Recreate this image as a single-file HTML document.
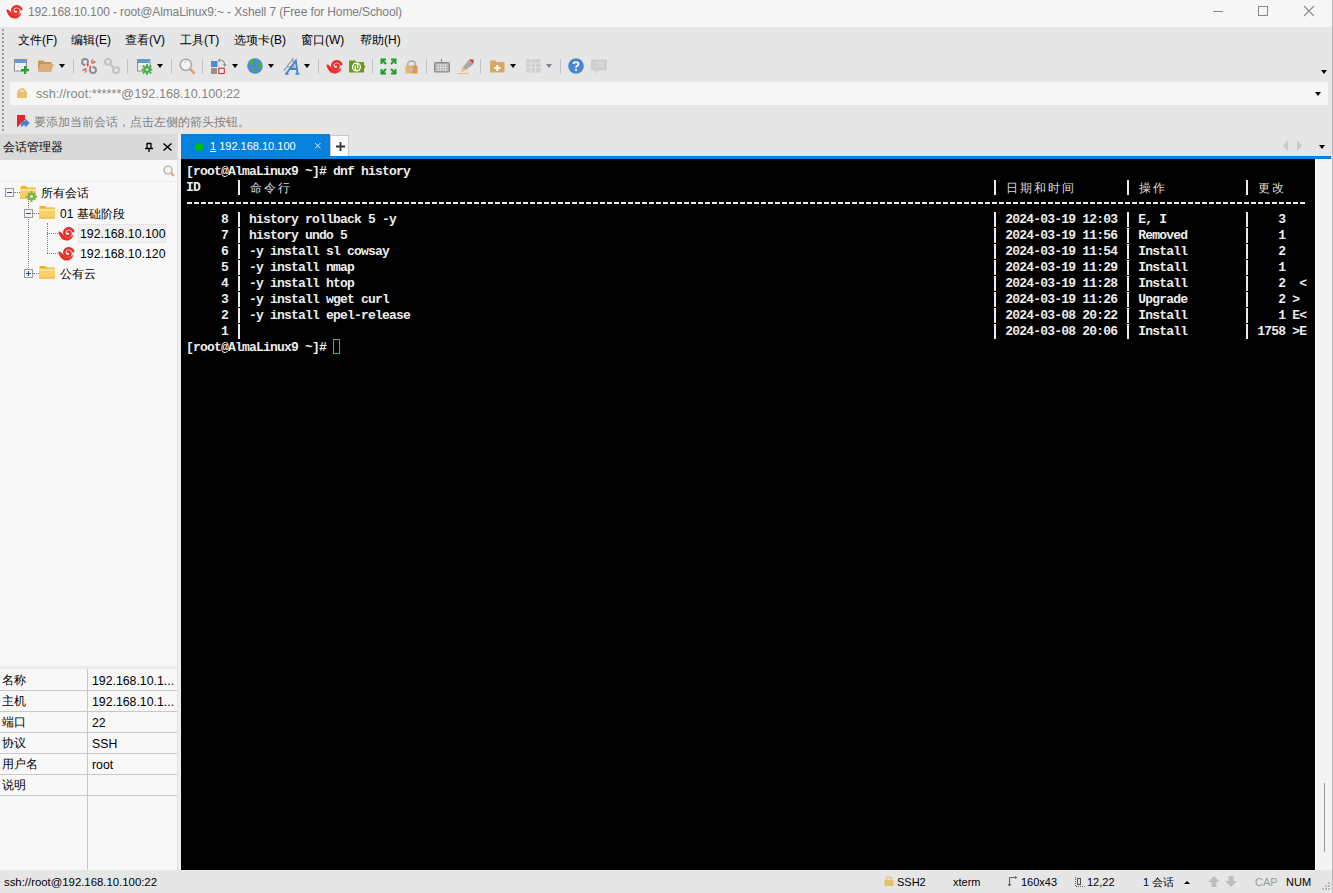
<!DOCTYPE html>
<html><head><meta charset="utf-8">
<style>
*{box-sizing:border-box;margin:0;padding:0}
html,body{width:1333px;height:893px;overflow:hidden;background:#e6e6e6;font-family:"Liberation Sans",sans-serif;font-size:12px;color:#000}
.a{position:absolute}
svg{position:absolute;overflow:visible}
#title{left:0;top:0;width:1333px;height:27px;background:#f6f6f6}
#menu{left:0;top:27px;width:1332px;height:25px;background:#e6e6e6}
#tool{left:0;top:52px;width:1332px;height:30px;background:#e6e6e6}
#addr{left:10px;top:82px;width:1318px;height:23px;background:#f6f6f6}
#hint{left:0;top:105px;width:1332px;height:29px;background:#e6e6e6}
#rborder{left:1332px;top:0;width:1px;height:893px;background:#b8b8b8}
#sm{left:0;top:134px;width:177px;height:736px;background:#f8f8f8}
#smh{left:0;top:134px;width:177px;height:26px;background:#d9d9d9}
#term{left:181px;top:159px;width:1134px;height:711px;background:#000}
#sb{left:1315px;top:159px;width:17px;height:711px;background:#f3f3f3;border-left:1px solid #fff}
#split{left:177px;top:134px;width:4px;height:736px;background:#efefef;border-left:1px solid #e2e2e2}
#status{left:0;top:870px;width:1332px;height:23px;background:#e6e6e6}
.t{position:absolute;white-space:nowrap;line-height:16px}
.tl{position:absolute;left:186px;font-family:"Liberation Mono",monospace;font-weight:bold;color:#ededed;font-size:13px;letter-spacing:-0.8px;line-height:16px;white-space:pre}
.bar{position:absolute;width:2.3px;height:15px;background:#ececec}
.dash{position:absolute;left:187px;width:1120px;height:2px;background:repeating-linear-gradient(90deg,#ececec 0 5px,transparent 5px 7px)}
.tc{position:absolute;font-family:"Liberation Sans",sans-serif;color:#dcdcdc;font-size:12px;letter-spacing:2px;line-height:16px;white-space:pre}
.menu{top:32px;font-size:12px}
.tri{position:absolute;width:0;height:0;border-left:3.5px solid transparent;border-right:3.5px solid transparent;border-top:4px solid #000}
.sep{position:absolute;top:59px;width:1px;height:15px;background:#c0c0c8}
.grid{position:absolute;left:0;width:177px;height:1px;background:#c8c8c8}
.gl{position:absolute;left:2px;font-size:12px;margin-top:1px}
.gv{position:absolute;left:92px;font-size:12.3px;margin-top:1.5px}
.st{position:absolute;top:874px;font-size:11px}
</style></head><body>
<div id="title" class="a"></div>
<div id="menu" class="a"></div>
<div id="tool" class="a"></div>
<div id="addr" class="a"></div>
<div id="hint" class="a"></div>
<div id="sm" class="a"></div>
<div id="smh" class="a"></div>
<div id="term" class="a"></div>
<div id="sb" class="a"></div>
<div id="split" class="a"></div>
<div id="status" class="a"></div>
<div id="rborder" class="a"></div>
<!-- title bar -->
<svg style="left:6px;top:3.5px" width="17" height="15" viewBox="0 0 17 15">
<path d="M9.23,7.03 L9.11,6.96 L8.99,6.86 L8.89,6.74 L8.79,6.61 L8.71,6.47 L8.65,6.30 L8.60,6.13 L8.56,5.95 L8.55,5.75 L8.56,5.55 L8.63,5.38 L8.73,5.24 L8.85,5.10 L8.97,4.97 L9.11,4.85 L9.27,4.73 L9.43,4.63 L9.60,4.54 L9.78,4.46 L9.97,4.40 L10.17,4.35 L10.37,4.31 L10.58,4.29 L10.80,4.29 L11.01,4.31 L11.23,4.34 L11.44,4.39 L11.66,4.46 L11.87,4.54 L12.07,4.64 L12.28,4.76 L12.47,4.90 L12.65,5.05 L12.83,5.22 L12.99,5.41 L13.14,5.61 L13.27,5.82 L13.39,6.04 L13.49,6.28 L13.58,6.53 L13.64,6.78 L13.69,7.04 L13.72,7.31 L13.72,7.58 L13.71,7.86 L13.67,8.13 L13.61,8.41 L13.53,8.68 L13.43,8.95 L13.30,9.21 L13.15,9.47 L12.99,9.71 L12.80,9.94 L12.59,10.17 L12.37,10.37 L12.13,10.56 L11.87,10.73 L11.59,10.89 L11.30,11.02 L11.00,11.13 L10.69,11.22 L10.37,11.28 L10.05,11.32 L9.71,11.34 L9.38,11.33 L9.04,11.29 L8.71,11.23 L8.37,11.14 L8.05,11.03 L7.73,10.88 L7.41,10.72 L7.11,10.53 L6.83,10.31 L6.55,10.07 L6.30,9.81 L6.06,9.52 L5.85,9.22 L5.66,8.90 L5.49,8.56 L5.34,8.21 L5.23,7.85 L5.14,7.47 L5.08,7.08 L5.04,6.69 L5.04,6.30 L5.07,5.90 L5.13,5.50 L5.22,5.11 L5.34,4.72 L5.50,4.34 L5.68,3.97 L5.89,3.61 L6.13,3.26 L6.40,2.94 L6.69,2.63 L7.01,2.34 L7.35,2.08 L7.72,1.84 L8.10,1.63 L8.50,1.45 L8.92,1.30 L9.35,1.18 L9.79,1.09 L10.24,1.04 L10.70,1.02 L11.16,1.03 L11.61,1.09 L12.07,1.17 L12.52,1.29 L12.97,1.45 L13.40,1.64 L13.82,1.87 L14.22,2.13 L14.61,2.42 L14.98,2.74 L15.32,3.09 L15.63,3.47 L15.92,3.87 L16.18,4.30 L16.40,4.74 L16.40,4.74 L16.48,5.24 L16.36,5.74 L16.06,6.15 L15.62,6.41 L15.12,6.49 L14.63,6.37 L14.22,6.07 L13.96,5.63 L13.96,5.63 L13.81,5.37 L13.64,5.12 L13.45,4.88 L13.25,4.67 L13.04,4.47 L12.81,4.29 L12.57,4.13 L12.32,3.99 L12.07,3.87 L11.81,3.78 L11.54,3.70 L11.28,3.65 L11.01,3.61 L10.74,3.60 L10.48,3.61 L10.22,3.64 L9.97,3.69 L9.73,3.75 L9.49,3.84 L9.26,3.94 L9.05,4.05 L8.85,4.19 L8.66,4.33 L8.48,4.49 L8.32,4.66 L8.18,4.84 L8.05,5.02 L7.93,5.22 L7.84,5.42 L7.76,5.62 L7.70,5.83 L7.65,6.03 L7.63,6.24 L7.61,6.45 L7.62,6.65 L7.64,6.85 L7.68,7.04 L7.73,7.23 L7.79,7.41 L7.87,7.58 L7.96,7.74 L8.05,7.90 L8.16,8.04 L8.28,8.17 L8.41,8.29 L8.54,8.40 L8.68,8.49 L8.83,8.57 L8.97,8.64 L9.12,8.69 L9.27,8.73 L9.42,8.76 L9.57,8.78 L9.72,8.78 L9.86,8.78 L10.00,8.76 L10.14,8.73 L10.27,8.69 L10.39,8.64 L10.51,8.58 L10.61,8.51 L10.71,8.44 L10.81,8.36 L10.89,8.27 L10.96,8.18 L11.03,8.09 L11.08,8.00 L11.12,7.90 L11.16,7.80 L11.18,7.70 L11.20,7.60 L11.21,7.51 L11.21,7.42 L11.20,7.33 L11.18,7.24 L11.16,7.16 L11.13,7.08 L11.09,7.01 L11.05,6.95 L11.00,6.89 L10.95,6.84 L10.90,6.79 L10.84,6.75 L10.79,6.72 L10.73,6.70 L10.67,6.68 L10.62,6.67 L10.56,6.67 L10.51,6.67 L10.46,6.68 L10.41,6.69 L10.36,6.71 L10.33,6.74 L10.29,6.77 L10.26,6.80 L10.24,6.83 L10.22,6.87 L10.21,6.91 L10.20,6.95 L10.20,6.99 L10.20,7.00 L10.20,7.00 L10.20,7.00 L10.20,7.00 L10.20,7.00 L10.20,7.00 L10.20,7.00 L10.20,7.00 L10.20,7.00 L10.20,7.00 L10.20,7.00 L10.20,7.00 L10.20,7.00 L10.20,7.00 L10.20,7.00 L10.20,7.00 L10.20,7.00 L10.20,7.00 L10.18,7.00 L10.14,7.00Z" fill="#e9302a"/>
<path d="M0.3,5.6 C2.5,5.4 4.5,7.2 6.2,9.6 C7.4,11.1 9.2,11.6 10.8,11.2 C12.6,10.8 14.6,9.6 15.4,8.2 C15.2,11.5 12.5,14.6 8.6,14.6 C4.8,14.6 1.2,11.2 0.3,5.6Z" fill="#e9302a"/>
</svg>
<div class="t" style="left:28px;top:4px;font-size:12px;letter-spacing:-0.12px;color:#7d7d7d">192.168.10.100 - root@AlmaLinux9:~ - Xshell 7 (Free for Home/School)</div>
<div class="a" style="left:1213px;top:11px;width:10px;height:1px;background:#8a8a8a"></div>
<div class="a" style="left:1258px;top:6px;width:10px;height:10px;border:1px solid #8a8a8a"></div>
<svg style="left:1304px;top:6px" width="10" height="10"><path d="M0 0L10 10M10 0L0 10" stroke="#8a8a8a" stroke-width="1.1"/></svg>
<!-- gripper -->
<div class="a" style="left:2px;top:29px;width:2px;height:104px;background:repeating-linear-gradient(#9a9a9a 0 2px,transparent 2px 4px)"></div>
<!-- menu -->
<div class="t menu" style="left:18px">文件(F)</div>
<div class="t menu" style="left:71px">编辑(E)</div>
<div class="t menu" style="left:125px">查看(V)</div>
<div class="t menu" style="left:180px">工具(T)</div>
<div class="t menu" style="left:234px">选项卡(B)</div>
<div class="t menu" style="left:301px">窗口(W)</div>
<div class="t menu" style="left:360px">帮助(H)</div>
<!-- toolbar -->
<svg style="left:14px;top:59px" width="16" height="16" viewBox="0 0 16 16">
<rect x="0.5" y="0.5" width="12" height="11.5" fill="#f4f4f4" stroke="#8e8e8e"/>
<rect x="1" y="1" width="11" height="3" fill="#5b9de0"/>
<path d="M3 9l2-3M6 9l2-3" stroke="#c8c8c8" stroke-width="0.8"/>
<rect x="10" y="7" width="2.2" height="8" fill="#1aa82a"/><rect x="7" y="10" width="8" height="2.2" fill="#1aa82a"/>
</svg>
<svg style="left:38px;top:60px" width="16" height="13" viewBox="0 0 16 13">
<path d="M0 0.5h5.5l1.5 1.5h6.5v2H3L0 12z" fill="#c9995a"/>
<path d="M0 12L2.5 4h13.5L13 12z" fill="#dcb07a"/><path d="M0 3v9h13V3" fill="none"/>
</svg>
<div class="tri" style="left:59px;top:64px"></div>
<div class="sep" style="left:73px"></div>
<svg style="left:81px;top:58px" width="16" height="16" viewBox="0 0 16 16">
<path d="M6.5 5.5 C7.5 4 7.2 1 4 1 C1.5 1 1 2.8 1 4 C1 6.5 3 7 4.5 7" fill="none" stroke="#8e8e8e" stroke-width="2"/>
<path d="M9.5 10.5 C8.5 12 8.8 15 12 15 C14.5 15 15 13.2 15 12 C15 9.5 13 9 11.5 9" fill="none" stroke="#8e8e8e" stroke-width="2"/>
<path d="M5.5 5 L8 6.5 L6.5 9z M10.5 11 L8 9.5 L9.5 7z" fill="#e03a3a"/>
<path d="M10.5 4 L11.8 1.2 M10.5 5.5 L14.5 3.5 M5.5 10.5 L1.5 12.5 M5.5 12 L4.2 14.8" stroke="#e86060" stroke-width="1.4"/>
</svg>
<svg style="left:104px;top:58px" width="16" height="16" viewBox="0 0 16 16">
<path d="M6.5 5.5 C7.5 4 7.2 1 4 1 C1.5 1 1 2.8 1 4 C1 6.5 3 7 4.5 7" fill="none" stroke="#c2c2c2" stroke-width="2"/>
<path d="M9.5 10.5 C8.5 12 8.8 15 12 15 C14.5 15 15 13.2 15 12 C15 9.5 13 9 11.5 9" fill="none" stroke="#c2c2c2" stroke-width="2"/>
<path d="M5 5 L11 11" stroke="#c2c2c2" stroke-width="2.4"/>
</svg>
<div class="sep" style="left:127px"></div>
<svg style="left:137px;top:59px" width="16" height="16" viewBox="0 0 16 16">
<rect x="0.5" y="0.5" width="12.5" height="11.5" fill="#f0f0f0" stroke="#8e8e8e"/>
<rect x="1" y="1" width="11.5" height="3" fill="#5b9de0"/>
<path d="M2.5 6l3 3" stroke="#c0c0c0" stroke-width="0.8"/>
<g fill="#3cb043"><circle cx="10" cy="10.5" r="3.6"/>
<rect x="9" y="5.2" width="2" height="2.2"/><rect x="9" y="13.6" width="2" height="2.2"/><rect x="4.7" y="9.5" width="2.2" height="2"/><rect x="13.1" y="9.5" width="2.2" height="2"/>
<rect x="5.6" y="6.3" width="2" height="2" transform="rotate(45 6.6 7.3)"/><rect x="12.4" y="6.3" width="2" height="2" transform="rotate(45 13.4 7.3)"/><rect x="5.6" y="12.7" width="2" height="2" transform="rotate(45 6.6 13.7)"/><rect x="12.4" y="12.7" width="2" height="2" transform="rotate(45 13.4 13.7)"/></g>
<circle cx="10" cy="10.5" r="1.6" fill="#d8d8d8"/>
</svg>
<div class="tri" style="left:157px;top:64px"></div>
<div class="sep" style="left:171px"></div>
<svg style="left:179px;top:58px" width="17" height="17" viewBox="0 0 17 17">
<circle cx="6.8" cy="6.8" r="5.6" fill="#f4f4f4" stroke="#a4a4a8" stroke-width="1.5"/>
<path d="M5 4.5 Q6 3.5 7.5 3.8" stroke="#dcdcdc" stroke-width="1"/>
<path d="M11.2 11.2l3.6 3.6" stroke="#dba060" stroke-width="2.6" stroke-linecap="round"/>
</svg>
<div class="sep" style="left:202px"></div>
<svg style="left:211px;top:58px" width="17" height="17" viewBox="0 0 17 17">
<rect x="0" y="3" width="6.5" height="6" fill="#4a8ad6"/>
<rect x="0" y="10" width="6" height="6" fill="#929292"/>
<rect x="7.8" y="10.3" width="5.4" height="5.2" fill="#fff" stroke="#e03030" stroke-width="1.2"/>
<path d="M7.5 2.5 C10.5 1 13.5 3 13.8 7" stroke="#8c8c8c" stroke-width="1.1" fill="none"/>
<path d="M8.8 0.3 L6.8 2.5 L9 4.4z M11.8 6.2 L13.8 8.8 L15.8 6.2z" fill="#8c8c8c"/>
</svg>
<div class="tri" style="left:232px;top:64px"></div>
<svg style="left:247px;top:58px" width="16" height="16" viewBox="0 0 16 16">
<circle cx="8" cy="8" r="7.8" fill="#4a8ad6"/>
<path d="M2.3 3.2 C3.5 1.5 5.5 0.8 7.2 1.2 C7.6 2.4 6.8 3.2 6.2 4 C6.8 5 6.3 6.8 5 7.2 C3.8 7.5 3 6.6 2.2 7.6 C1.4 6.2 1.4 4.4 2.3 3.2Z" fill="#44b04a"/>
<path d="M11 4 C12.5 3.8 14.5 5 15 7 C15.2 9 14.5 11 13.6 11.8 C13 10.5 12.8 9.6 11.6 9.3 C10.6 8.5 11.2 7 10.5 6 C10.3 5.2 10.5 4.4 11 4Z" fill="#44b04a"/>
<path d="M6.5 9.5 C7.5 9 9 9.5 9.2 10.8 C9.3 12 8.6 13 8.2 14 C7.6 14.8 6.8 14.5 6.6 13.5 C6.3 12.2 6 10.5 6.5 9.5Z" fill="#44b04a"/>
</svg>
<div class="tri" style="left:268px;top:64px"></div>
<svg style="left:283px;top:58px" width="17" height="17" viewBox="0 0 17 17">
<path d="M0.8 12.8 L9.8 0.8 L11 10.5 M4.5 9 H10.5" stroke="#9c9c9c" stroke-width="1.2" fill="none"/>
<path d="M3.2 15.8 L12.8 2.6 L14.6 15.8 M6.8 11 H14 M2 15.8 H5.5 M12.5 15.8 H16.3" stroke="#4a86d0" stroke-width="1.9" fill="none"/>
</svg>
<div class="tri" style="left:304px;top:64px"></div>
<div class="sep" style="left:318px"></div>
<svg style="left:326px;top:59px" width="17" height="15" viewBox="0 0 17 15">
<path d="M9.23,7.03 L9.11,6.96 L8.99,6.86 L8.89,6.74 L8.79,6.61 L8.71,6.47 L8.65,6.30 L8.60,6.13 L8.56,5.95 L8.55,5.75 L8.56,5.55 L8.63,5.38 L8.73,5.24 L8.85,5.10 L8.97,4.97 L9.11,4.85 L9.27,4.73 L9.43,4.63 L9.60,4.54 L9.78,4.46 L9.97,4.40 L10.17,4.35 L10.37,4.31 L10.58,4.29 L10.80,4.29 L11.01,4.31 L11.23,4.34 L11.44,4.39 L11.66,4.46 L11.87,4.54 L12.07,4.64 L12.28,4.76 L12.47,4.90 L12.65,5.05 L12.83,5.22 L12.99,5.41 L13.14,5.61 L13.27,5.82 L13.39,6.04 L13.49,6.28 L13.58,6.53 L13.64,6.78 L13.69,7.04 L13.72,7.31 L13.72,7.58 L13.71,7.86 L13.67,8.13 L13.61,8.41 L13.53,8.68 L13.43,8.95 L13.30,9.21 L13.15,9.47 L12.99,9.71 L12.80,9.94 L12.59,10.17 L12.37,10.37 L12.13,10.56 L11.87,10.73 L11.59,10.89 L11.30,11.02 L11.00,11.13 L10.69,11.22 L10.37,11.28 L10.05,11.32 L9.71,11.34 L9.38,11.33 L9.04,11.29 L8.71,11.23 L8.37,11.14 L8.05,11.03 L7.73,10.88 L7.41,10.72 L7.11,10.53 L6.83,10.31 L6.55,10.07 L6.30,9.81 L6.06,9.52 L5.85,9.22 L5.66,8.90 L5.49,8.56 L5.34,8.21 L5.23,7.85 L5.14,7.47 L5.08,7.08 L5.04,6.69 L5.04,6.30 L5.07,5.90 L5.13,5.50 L5.22,5.11 L5.34,4.72 L5.50,4.34 L5.68,3.97 L5.89,3.61 L6.13,3.26 L6.40,2.94 L6.69,2.63 L7.01,2.34 L7.35,2.08 L7.72,1.84 L8.10,1.63 L8.50,1.45 L8.92,1.30 L9.35,1.18 L9.79,1.09 L10.24,1.04 L10.70,1.02 L11.16,1.03 L11.61,1.09 L12.07,1.17 L12.52,1.29 L12.97,1.45 L13.40,1.64 L13.82,1.87 L14.22,2.13 L14.61,2.42 L14.98,2.74 L15.32,3.09 L15.63,3.47 L15.92,3.87 L16.18,4.30 L16.40,4.74 L16.40,4.74 L16.48,5.24 L16.36,5.74 L16.06,6.15 L15.62,6.41 L15.12,6.49 L14.63,6.37 L14.22,6.07 L13.96,5.63 L13.96,5.63 L13.81,5.37 L13.64,5.12 L13.45,4.88 L13.25,4.67 L13.04,4.47 L12.81,4.29 L12.57,4.13 L12.32,3.99 L12.07,3.87 L11.81,3.78 L11.54,3.70 L11.28,3.65 L11.01,3.61 L10.74,3.60 L10.48,3.61 L10.22,3.64 L9.97,3.69 L9.73,3.75 L9.49,3.84 L9.26,3.94 L9.05,4.05 L8.85,4.19 L8.66,4.33 L8.48,4.49 L8.32,4.66 L8.18,4.84 L8.05,5.02 L7.93,5.22 L7.84,5.42 L7.76,5.62 L7.70,5.83 L7.65,6.03 L7.63,6.24 L7.61,6.45 L7.62,6.65 L7.64,6.85 L7.68,7.04 L7.73,7.23 L7.79,7.41 L7.87,7.58 L7.96,7.74 L8.05,7.90 L8.16,8.04 L8.28,8.17 L8.41,8.29 L8.54,8.40 L8.68,8.49 L8.83,8.57 L8.97,8.64 L9.12,8.69 L9.27,8.73 L9.42,8.76 L9.57,8.78 L9.72,8.78 L9.86,8.78 L10.00,8.76 L10.14,8.73 L10.27,8.69 L10.39,8.64 L10.51,8.58 L10.61,8.51 L10.71,8.44 L10.81,8.36 L10.89,8.27 L10.96,8.18 L11.03,8.09 L11.08,8.00 L11.12,7.90 L11.16,7.80 L11.18,7.70 L11.20,7.60 L11.21,7.51 L11.21,7.42 L11.20,7.33 L11.18,7.24 L11.16,7.16 L11.13,7.08 L11.09,7.01 L11.05,6.95 L11.00,6.89 L10.95,6.84 L10.90,6.79 L10.84,6.75 L10.79,6.72 L10.73,6.70 L10.67,6.68 L10.62,6.67 L10.56,6.67 L10.51,6.67 L10.46,6.68 L10.41,6.69 L10.36,6.71 L10.33,6.74 L10.29,6.77 L10.26,6.80 L10.24,6.83 L10.22,6.87 L10.21,6.91 L10.20,6.95 L10.20,6.99 L10.20,7.00 L10.20,7.00 L10.20,7.00 L10.20,7.00 L10.20,7.00 L10.20,7.00 L10.20,7.00 L10.20,7.00 L10.20,7.00 L10.20,7.00 L10.20,7.00 L10.20,7.00 L10.20,7.00 L10.20,7.00 L10.20,7.00 L10.20,7.00 L10.20,7.00 L10.20,7.00 L10.18,7.00 L10.14,7.00Z" fill="#e9302a"/>
<path d="M0.3,5.6 C2.5,5.4 4.5,7.2 6.2,9.6 C7.4,11.1 9.2,11.6 10.8,11.2 C12.6,10.8 14.6,9.6 15.4,8.2 C15.2,11.5 12.5,14.6 8.6,14.6 C4.8,14.6 1.2,11.2 0.3,5.6Z" fill="#e9302a"/>
</svg>
<svg style="left:349px;top:60px" width="17" height="13" viewBox="0 0 17 13">
<path d="M0 0.5h6l1.5 1.5h7.5v3.5h1.5l-1.5 4V12.5H0z" fill="#6c9a1e"/>
<circle cx="7.5" cy="7" r="4.6" fill="#fff"/>
<path d="M5 9.5 V6 C5 4.5 7 4 7.5 5.5 V8.5 C8 10 10 9.5 10 8 V4.5" stroke="#6c9a1e" stroke-width="1.2" fill="none"/>
</svg>
<div class="sep" style="left:372px"></div>
<svg style="left:381px;top:59px" width="15" height="15" viewBox="0 0 15 15">
<path d="M0.5 5V0.5H5M1 1l4 4M14.5 5V0.5H10M14 1l-4 4M0.5 10v4.5H5M1 14l4-4M14.5 10v4.5H10M14 14l-4-4" stroke="#1b9e2e" stroke-width="2" fill="none"/>
</svg>
<svg style="left:405px;top:59px" width="13" height="15" viewBox="0 0 13 15">
<path d="M2.8 7V4.8 C2.8 1.2 10.2 1.2 10.2 4.8V7" stroke="#a6a6b0" stroke-width="1.5" fill="none"/>
<rect x="0.5" y="6.5" width="6" height="8" fill="#e2b574"/>
<rect x="6.5" y="6.5" width="6" height="8" fill="#d9985a"/>
<rect x="5.5" y="8.5" width="2" height="3.5" fill="#b8c8d8"/>
</svg>
<div class="sep" style="left:426px"></div>
<svg style="left:434px;top:59px" width="16" height="14" viewBox="0 0 16 14">
<path d="M7.5 0v3" stroke="#888" stroke-width="1.2"/>
<rect x="0.5" y="3.5" width="15" height="9.5" rx="1" fill="#a8a8a8" stroke="#8a8a8a"/>
<path d="M2 6h12M2 8.5h12M2 11h12M4 5v7M6.5 5v7M9 5v7M11.5 5v7" stroke="#e6e6e6" stroke-width="0.8"/>
</svg>
<svg style="left:457px;top:59px" width="17" height="15" viewBox="0 0 17 15">
<path d="M12 0.5h4.5v4.5z" fill="#e02a2a"/>
<path d="M12 0.5 L16.5 5 L9 11 L6 11 L6 8z" fill="#a9a9a9"/>
<path d="M6 8 L9 11 L5.5 13 L4 11.5z" fill="#e8c28a"/>
<path d="M0 14.5h12" stroke="#e8c28a" stroke-width="1.2"/>
</svg>
<div class="sep" style="left:480px"></div>
<svg style="left:490px;top:60px" width="15" height="13" viewBox="0 0 15 13">
<path d="M0 0.5h5.5l1.5 1.5h7.5V12.5H0z" fill="#d8a868"/>
<path d="M7.3 5v6M4.3 8h6" stroke="#fff" stroke-width="2"/>
</svg>
<div class="tri" style="left:510px;top:64px"></div>
<svg style="left:526px;top:59px" width="15" height="14" viewBox="0 0 15 14">
<rect x="0" y="0" width="14.5" height="13.5" fill="#cfcfcf"/>
<path d="M0 4h14.5M0 8.5h14.5M5 0v13.5M9.5 4v9.5" stroke="#e4e4e4" stroke-width="0.9"/>
</svg>
<div class="tri" style="left:546px;top:64px;border-top-color:#8a7a9a"></div>
<div class="sep" style="left:560px"></div>
<svg style="left:568px;top:58px" width="16" height="16" viewBox="0 0 16 16">
<circle cx="8" cy="8" r="7.8" fill="#4a86d0"/>
<path d="M5.5 6 C5.5 3.5 10.5 3.5 10.5 6 C10.5 7.8 8 7.8 8 9.8" stroke="#fff" stroke-width="1.8" fill="none"/>
<circle cx="8" cy="12" r="1.1" fill="#fff"/>
</svg>
<svg style="left:591px;top:59px" width="17" height="16" viewBox="0 0 17 16">
<path d="M1.5 0.5h13 a1.5 1.5 0 0 1 1.5 1.5v8 a1.5 1.5 0 0 1 -1.5 1.5H7L4.5 15V11.5H1.5 a1.5 1.5 0 0 1 -1.5 -1.5V2 a1.5 1.5 0 0 1 1.5 -1.5z" fill="#cdcdcd"/>
<path d="M3 4h10M3 7h10" stroke="#e0e0e0" stroke-width="1"/>
</svg>
<div class="tri" style="left:1321px;top:70px"></div>
<!-- address bar -->
<svg style="left:17px;top:88px" width="10" height="10" viewBox="0 0 10 10">
<path d="M2.2 4V3.2 C2.2 0.6 7.8 0.6 7.8 3.2V4" stroke="#e8c070" stroke-width="2" fill="none"/>
<rect x="0" y="3.5" width="10" height="6.5" rx="0.8" fill="#e8c070"/>
</svg>
<div class="t" style="left:36px;top:86px;font-size:12.7px;color:#858585">ssh://root:******@192.168.10.100:22</div>
<div class="tri" style="left:1315px;top:92px"></div>
<!-- hint bar -->
<svg style="left:17px;top:115px" width="14" height="14" viewBox="0 0 14 14">
<path d="M0 0H8V5L3.8 8.5L0 12.5Z" fill="#e2262e"/>
<path d="M4 6H8.3V3.6L12.8 8L8.3 12.6V10.5H6.2L4.8 12.3L4 10.2Z" fill="#4684d4"/>
</svg>
<div class="t" style="left:34px;top:114px;font-size:11.8px;color:#808080">要添加当前会话，点击左侧的箭头按钮。</div>
<div class="tl" style="top:164px">[root@AlmaLinux9 ~]# dnf history</div>
<div class="tl" style="top:180px">ID</div>
<div class="bar" style="top:180px;left:237.6px"></div>
<div class="bar" style="top:180px;left:993.6px"></div>
<div class="bar" style="top:180px;left:1126.6px"></div>
<div class="bar" style="top:180px;left:1245.6px"></div>
<div class="tc" style="top:180px;left:250px">命令行</div>
<div class="tc" style="top:180px;left:1006px">日期和时间</div>
<div class="tc" style="top:180px;left:1139px">操作</div>
<div class="tc" style="top:180px;left:1258px">更改</div>
<div class="dash" style="top:202px"></div>
<div class="bar" style="top:212px;left:237.6px"></div>
<div class="bar" style="top:212px;left:993.6px"></div>
<div class="bar" style="top:212px;left:1126.6px"></div>
<div class="bar" style="top:212px;left:1245.6px"></div>
<div class="tl" style="top:212px">     8   history rollback 5 -y                                                                                       2024-03-19 12:03   E, I                3</div>
<div class="bar" style="top:228px;left:237.6px"></div>
<div class="bar" style="top:228px;left:993.6px"></div>
<div class="bar" style="top:228px;left:1126.6px"></div>
<div class="bar" style="top:228px;left:1245.6px"></div>
<div class="tl" style="top:228px">     7   history undo 5                                                                                              2024-03-19 11:56   Removed             1</div>
<div class="bar" style="top:244px;left:237.6px"></div>
<div class="bar" style="top:244px;left:993.6px"></div>
<div class="bar" style="top:244px;left:1126.6px"></div>
<div class="bar" style="top:244px;left:1245.6px"></div>
<div class="tl" style="top:244px">     6   -y install sl cowsay                                                                                        2024-03-19 11:54   Install             2</div>
<div class="bar" style="top:260px;left:237.6px"></div>
<div class="bar" style="top:260px;left:993.6px"></div>
<div class="bar" style="top:260px;left:1126.6px"></div>
<div class="bar" style="top:260px;left:1245.6px"></div>
<div class="tl" style="top:260px">     5   -y install nmap                                                                                             2024-03-19 11:29   Install             1</div>
<div class="bar" style="top:276px;left:237.6px"></div>
<div class="bar" style="top:276px;left:993.6px"></div>
<div class="bar" style="top:276px;left:1126.6px"></div>
<div class="bar" style="top:276px;left:1245.6px"></div>
<div class="tl" style="top:276px">     4   -y install htop                                                                                             2024-03-19 11:28   Install             2  &lt;</div>
<div class="bar" style="top:292px;left:237.6px"></div>
<div class="bar" style="top:292px;left:993.6px"></div>
<div class="bar" style="top:292px;left:1126.6px"></div>
<div class="bar" style="top:292px;left:1245.6px"></div>
<div class="tl" style="top:292px">     3   -y install wget curl                                                                                        2024-03-19 11:26   Upgrade             2 &gt;</div>
<div class="bar" style="top:308px;left:237.6px"></div>
<div class="bar" style="top:308px;left:993.6px"></div>
<div class="bar" style="top:308px;left:1126.6px"></div>
<div class="bar" style="top:308px;left:1245.6px"></div>
<div class="tl" style="top:308px">     2   -y install epel-release                                                                                     2024-03-08 20:22   Install             1 E&lt;</div>
<div class="bar" style="top:324px;left:237.6px"></div>
<div class="bar" style="top:324px;left:993.6px"></div>
<div class="bar" style="top:324px;left:1126.6px"></div>
<div class="bar" style="top:324px;left:1245.6px"></div>
<div class="tl" style="top:324px">     1                                                                                                               2024-03-08 20:06   Install          1758 &gt;E</div>
<div class="tl" style="top:340px">[root@AlmaLinux9 ~]#</div><!-- session manager -->
<div class="t" style="left:3px;top:139px;font-size:12px">会话管理器</div>
<svg style="left:145px;top:143px" width="8" height="9" viewBox="0 0 8 9">
<path d="M1.5 0.5h5M2 0.5v4.5M6 0.5v4.5M0 5.5h8M4 5.5v3.5" stroke="#000" stroke-width="1.3" fill="none"/>
</svg>
<svg style="left:163px;top:143px" width="9" height="8" viewBox="0 0 9 8"><path d="M0.5 0.5l8 7M8.5 0.5l-8 7" stroke="#000" stroke-width="1.5"/></svg>
<div class="a" style="left:0;top:160px;width:177px;height:22px;background:#f8f8f8"></div>
<div class="a" style="left:0;top:181px;width:177px;height:1px;background:#ebebe4"></div>
<svg style="left:163px;top:165px" width="12" height="12" viewBox="0 0 12 12">
<circle cx="5" cy="5" r="4" fill="#f4f4f4" stroke="#a6a6ae" stroke-width="1.2"/>
<path d="M8 8l3 3" stroke="#d8a070" stroke-width="1.8"/>
</svg>
<!-- tree lines -->
<div class="a" style="left:14px;top:192px;width:6px;border-top:1px dotted #808080"></div>
<div class="a" style="left:28px;top:199px;height:69px;border-left:1px dotted #808080"></div>
<div class="a" style="left:33px;top:213px;width:6px;border-top:1px dotted #808080"></div>
<div class="a" style="left:33px;top:273px;width:6px;border-top:1px dotted #808080"></div>
<div class="a" style="left:47px;top:223px;height:30px;border-left:1px dotted #808080"></div>
<div class="a" style="left:47px;top:233px;width:11px;border-top:1px dotted #808080"></div>
<div class="a" style="left:47px;top:253px;width:11px;border-top:1px dotted #808080"></div>
<!-- expanders -->
<div class="a" style="left:5px;top:188px;width:9px;height:9px;border:1px solid #9a9a9a;background:#f2f2f2"><div class="a" style="left:1px;top:3px;width:5px;height:1px;background:#3a4a9a"></div></div>
<div class="a" style="left:24px;top:209px;width:9px;height:9px;border:1px solid #9a9a9a;background:#f2f2f2"><div class="a" style="left:1px;top:3px;width:5px;height:1px;background:#3a4a9a"></div></div>
<div class="a" style="left:24px;top:269px;width:9px;height:9px;border:1px solid #9a9a9a;background:#f2f2f2"><div class="a" style="left:1px;top:3px;width:5px;height:1px;background:#3a4a9a"></div><div class="a" style="left:3px;top:1px;width:1px;height:5px;background:#3a4a9a"></div></div>
<!-- folder icons -->
<svg style="left:20px;top:186px" width="16" height="13" viewBox="0 0 16 13">
<path d="M0.5 1 Q0.5 0 1.5 0 H6 L7.5 1.5 H15 Q16 1.5 16 2.5 V3 H0.5Z" fill="#f2b21c"/>
<path d="M0 2.5 H16 V12 Q16 12.8 15.2 12.8 H0.8 Q0 12.8 0 12Z" fill="#f9cf68"/>
<path d="M0 3.2 H16 V5 H0Z" fill="#fbe39a"/>
<path d="M0 12 H16" stroke="#f0b030" stroke-width="0.9"/>
</svg>
<svg style="left:26px;top:191px" width="11" height="11" viewBox="0 0 11 11">
<g fill="#7cb342"><circle cx="5.5" cy="5.5" r="3.6"/>
<path d="M4.5 0h2v2h-2zM4.5 9h2v2h-2zM0 4.5h2v2h-2zM9 4.5h2v2h-2zM1.3 2.7l1.4-1.4 1.4 1.4-1.4 1.4zM6.9 8.3l1.4-1.4 1.4 1.4-1.4 1.4zM1.3 8.3l1.4-1.4 1.4 1.4-1.4 1.4zM6.9 2.7l1.4-1.4 1.4 1.4-1.4 1.4z"/></g>
<circle cx="5.5" cy="5.5" r="1.3" fill="#fff"/>
</svg>
<svg style="left:39px;top:206px" width="16" height="13" viewBox="0 0 16 13">
<path d="M0.5 1 Q0.5 0 1.5 0 H6 L7.5 1.5 H15 Q16 1.5 16 2.5 V3 H0.5Z" fill="#f2b21c"/>
<path d="M0 2.5 H16 V12 Q16 12.8 15.2 12.8 H0.8 Q0 12.8 0 12Z" fill="#f9cf68"/>
<path d="M0 3.2 H16 V5 H0Z" fill="#fbe39a"/>
<path d="M0 12 H16" stroke="#f0b030" stroke-width="0.9"/>
</svg>
<svg style="left:39px;top:266px" width="16" height="13" viewBox="0 0 16 13">
<path d="M0.5 1 Q0.5 0 1.5 0 H6 L7.5 1.5 H15 Q16 1.5 16 2.5 V3 H0.5Z" fill="#f2b21c"/>
<path d="M0 2.5 H16 V12 Q16 12.8 15.2 12.8 H0.8 Q0 12.8 0 12Z" fill="#f9cf68"/>
<path d="M0 3.2 H16 V5 H0Z" fill="#fbe39a"/>
<path d="M0 12 H16" stroke="#f0b030" stroke-width="0.9"/>
</svg>
<!-- session icons -->
<svg style="left:58px;top:226px" width="17" height="15" viewBox="0 0 17 15">
<path d="M9.23,7.03 L9.11,6.96 L8.99,6.86 L8.89,6.74 L8.79,6.61 L8.71,6.47 L8.65,6.30 L8.60,6.13 L8.56,5.95 L8.55,5.75 L8.56,5.55 L8.63,5.38 L8.73,5.24 L8.85,5.10 L8.97,4.97 L9.11,4.85 L9.27,4.73 L9.43,4.63 L9.60,4.54 L9.78,4.46 L9.97,4.40 L10.17,4.35 L10.37,4.31 L10.58,4.29 L10.80,4.29 L11.01,4.31 L11.23,4.34 L11.44,4.39 L11.66,4.46 L11.87,4.54 L12.07,4.64 L12.28,4.76 L12.47,4.90 L12.65,5.05 L12.83,5.22 L12.99,5.41 L13.14,5.61 L13.27,5.82 L13.39,6.04 L13.49,6.28 L13.58,6.53 L13.64,6.78 L13.69,7.04 L13.72,7.31 L13.72,7.58 L13.71,7.86 L13.67,8.13 L13.61,8.41 L13.53,8.68 L13.43,8.95 L13.30,9.21 L13.15,9.47 L12.99,9.71 L12.80,9.94 L12.59,10.17 L12.37,10.37 L12.13,10.56 L11.87,10.73 L11.59,10.89 L11.30,11.02 L11.00,11.13 L10.69,11.22 L10.37,11.28 L10.05,11.32 L9.71,11.34 L9.38,11.33 L9.04,11.29 L8.71,11.23 L8.37,11.14 L8.05,11.03 L7.73,10.88 L7.41,10.72 L7.11,10.53 L6.83,10.31 L6.55,10.07 L6.30,9.81 L6.06,9.52 L5.85,9.22 L5.66,8.90 L5.49,8.56 L5.34,8.21 L5.23,7.85 L5.14,7.47 L5.08,7.08 L5.04,6.69 L5.04,6.30 L5.07,5.90 L5.13,5.50 L5.22,5.11 L5.34,4.72 L5.50,4.34 L5.68,3.97 L5.89,3.61 L6.13,3.26 L6.40,2.94 L6.69,2.63 L7.01,2.34 L7.35,2.08 L7.72,1.84 L8.10,1.63 L8.50,1.45 L8.92,1.30 L9.35,1.18 L9.79,1.09 L10.24,1.04 L10.70,1.02 L11.16,1.03 L11.61,1.09 L12.07,1.17 L12.52,1.29 L12.97,1.45 L13.40,1.64 L13.82,1.87 L14.22,2.13 L14.61,2.42 L14.98,2.74 L15.32,3.09 L15.63,3.47 L15.92,3.87 L16.18,4.30 L16.40,4.74 L16.40,4.74 L16.48,5.24 L16.36,5.74 L16.06,6.15 L15.62,6.41 L15.12,6.49 L14.63,6.37 L14.22,6.07 L13.96,5.63 L13.96,5.63 L13.81,5.37 L13.64,5.12 L13.45,4.88 L13.25,4.67 L13.04,4.47 L12.81,4.29 L12.57,4.13 L12.32,3.99 L12.07,3.87 L11.81,3.78 L11.54,3.70 L11.28,3.65 L11.01,3.61 L10.74,3.60 L10.48,3.61 L10.22,3.64 L9.97,3.69 L9.73,3.75 L9.49,3.84 L9.26,3.94 L9.05,4.05 L8.85,4.19 L8.66,4.33 L8.48,4.49 L8.32,4.66 L8.18,4.84 L8.05,5.02 L7.93,5.22 L7.84,5.42 L7.76,5.62 L7.70,5.83 L7.65,6.03 L7.63,6.24 L7.61,6.45 L7.62,6.65 L7.64,6.85 L7.68,7.04 L7.73,7.23 L7.79,7.41 L7.87,7.58 L7.96,7.74 L8.05,7.90 L8.16,8.04 L8.28,8.17 L8.41,8.29 L8.54,8.40 L8.68,8.49 L8.83,8.57 L8.97,8.64 L9.12,8.69 L9.27,8.73 L9.42,8.76 L9.57,8.78 L9.72,8.78 L9.86,8.78 L10.00,8.76 L10.14,8.73 L10.27,8.69 L10.39,8.64 L10.51,8.58 L10.61,8.51 L10.71,8.44 L10.81,8.36 L10.89,8.27 L10.96,8.18 L11.03,8.09 L11.08,8.00 L11.12,7.90 L11.16,7.80 L11.18,7.70 L11.20,7.60 L11.21,7.51 L11.21,7.42 L11.20,7.33 L11.18,7.24 L11.16,7.16 L11.13,7.08 L11.09,7.01 L11.05,6.95 L11.00,6.89 L10.95,6.84 L10.90,6.79 L10.84,6.75 L10.79,6.72 L10.73,6.70 L10.67,6.68 L10.62,6.67 L10.56,6.67 L10.51,6.67 L10.46,6.68 L10.41,6.69 L10.36,6.71 L10.33,6.74 L10.29,6.77 L10.26,6.80 L10.24,6.83 L10.22,6.87 L10.21,6.91 L10.20,6.95 L10.20,6.99 L10.20,7.00 L10.20,7.00 L10.20,7.00 L10.20,7.00 L10.20,7.00 L10.20,7.00 L10.20,7.00 L10.20,7.00 L10.20,7.00 L10.20,7.00 L10.20,7.00 L10.20,7.00 L10.20,7.00 L10.20,7.00 L10.20,7.00 L10.20,7.00 L10.20,7.00 L10.20,7.00 L10.18,7.00 L10.14,7.00Z" fill="#e9302a"/>
<path d="M0.3,5.6 C2.5,5.4 4.5,7.2 6.2,9.6 C7.4,11.1 9.2,11.6 10.8,11.2 C12.6,10.8 14.6,9.6 15.4,8.2 C15.2,11.5 12.5,14.6 8.6,14.6 C4.8,14.6 1.2,11.2 0.3,5.6Z" fill="#e9302a"/>
</svg>
<svg style="left:58px;top:246px" width="17" height="15" viewBox="0 0 17 15">
<path d="M9.23,7.03 L9.11,6.96 L8.99,6.86 L8.89,6.74 L8.79,6.61 L8.71,6.47 L8.65,6.30 L8.60,6.13 L8.56,5.95 L8.55,5.75 L8.56,5.55 L8.63,5.38 L8.73,5.24 L8.85,5.10 L8.97,4.97 L9.11,4.85 L9.27,4.73 L9.43,4.63 L9.60,4.54 L9.78,4.46 L9.97,4.40 L10.17,4.35 L10.37,4.31 L10.58,4.29 L10.80,4.29 L11.01,4.31 L11.23,4.34 L11.44,4.39 L11.66,4.46 L11.87,4.54 L12.07,4.64 L12.28,4.76 L12.47,4.90 L12.65,5.05 L12.83,5.22 L12.99,5.41 L13.14,5.61 L13.27,5.82 L13.39,6.04 L13.49,6.28 L13.58,6.53 L13.64,6.78 L13.69,7.04 L13.72,7.31 L13.72,7.58 L13.71,7.86 L13.67,8.13 L13.61,8.41 L13.53,8.68 L13.43,8.95 L13.30,9.21 L13.15,9.47 L12.99,9.71 L12.80,9.94 L12.59,10.17 L12.37,10.37 L12.13,10.56 L11.87,10.73 L11.59,10.89 L11.30,11.02 L11.00,11.13 L10.69,11.22 L10.37,11.28 L10.05,11.32 L9.71,11.34 L9.38,11.33 L9.04,11.29 L8.71,11.23 L8.37,11.14 L8.05,11.03 L7.73,10.88 L7.41,10.72 L7.11,10.53 L6.83,10.31 L6.55,10.07 L6.30,9.81 L6.06,9.52 L5.85,9.22 L5.66,8.90 L5.49,8.56 L5.34,8.21 L5.23,7.85 L5.14,7.47 L5.08,7.08 L5.04,6.69 L5.04,6.30 L5.07,5.90 L5.13,5.50 L5.22,5.11 L5.34,4.72 L5.50,4.34 L5.68,3.97 L5.89,3.61 L6.13,3.26 L6.40,2.94 L6.69,2.63 L7.01,2.34 L7.35,2.08 L7.72,1.84 L8.10,1.63 L8.50,1.45 L8.92,1.30 L9.35,1.18 L9.79,1.09 L10.24,1.04 L10.70,1.02 L11.16,1.03 L11.61,1.09 L12.07,1.17 L12.52,1.29 L12.97,1.45 L13.40,1.64 L13.82,1.87 L14.22,2.13 L14.61,2.42 L14.98,2.74 L15.32,3.09 L15.63,3.47 L15.92,3.87 L16.18,4.30 L16.40,4.74 L16.40,4.74 L16.48,5.24 L16.36,5.74 L16.06,6.15 L15.62,6.41 L15.12,6.49 L14.63,6.37 L14.22,6.07 L13.96,5.63 L13.96,5.63 L13.81,5.37 L13.64,5.12 L13.45,4.88 L13.25,4.67 L13.04,4.47 L12.81,4.29 L12.57,4.13 L12.32,3.99 L12.07,3.87 L11.81,3.78 L11.54,3.70 L11.28,3.65 L11.01,3.61 L10.74,3.60 L10.48,3.61 L10.22,3.64 L9.97,3.69 L9.73,3.75 L9.49,3.84 L9.26,3.94 L9.05,4.05 L8.85,4.19 L8.66,4.33 L8.48,4.49 L8.32,4.66 L8.18,4.84 L8.05,5.02 L7.93,5.22 L7.84,5.42 L7.76,5.62 L7.70,5.83 L7.65,6.03 L7.63,6.24 L7.61,6.45 L7.62,6.65 L7.64,6.85 L7.68,7.04 L7.73,7.23 L7.79,7.41 L7.87,7.58 L7.96,7.74 L8.05,7.90 L8.16,8.04 L8.28,8.17 L8.41,8.29 L8.54,8.40 L8.68,8.49 L8.83,8.57 L8.97,8.64 L9.12,8.69 L9.27,8.73 L9.42,8.76 L9.57,8.78 L9.72,8.78 L9.86,8.78 L10.00,8.76 L10.14,8.73 L10.27,8.69 L10.39,8.64 L10.51,8.58 L10.61,8.51 L10.71,8.44 L10.81,8.36 L10.89,8.27 L10.96,8.18 L11.03,8.09 L11.08,8.00 L11.12,7.90 L11.16,7.80 L11.18,7.70 L11.20,7.60 L11.21,7.51 L11.21,7.42 L11.20,7.33 L11.18,7.24 L11.16,7.16 L11.13,7.08 L11.09,7.01 L11.05,6.95 L11.00,6.89 L10.95,6.84 L10.90,6.79 L10.84,6.75 L10.79,6.72 L10.73,6.70 L10.67,6.68 L10.62,6.67 L10.56,6.67 L10.51,6.67 L10.46,6.68 L10.41,6.69 L10.36,6.71 L10.33,6.74 L10.29,6.77 L10.26,6.80 L10.24,6.83 L10.22,6.87 L10.21,6.91 L10.20,6.95 L10.20,6.99 L10.20,7.00 L10.20,7.00 L10.20,7.00 L10.20,7.00 L10.20,7.00 L10.20,7.00 L10.20,7.00 L10.20,7.00 L10.20,7.00 L10.20,7.00 L10.20,7.00 L10.20,7.00 L10.20,7.00 L10.20,7.00 L10.20,7.00 L10.20,7.00 L10.20,7.00 L10.20,7.00 L10.18,7.00 L10.14,7.00Z" fill="#e9302a"/>
<path d="M0.3,5.6 C2.5,5.4 4.5,7.2 6.2,9.6 C7.4,11.1 9.2,11.6 10.8,11.2 C12.6,10.8 14.6,9.6 15.4,8.2 C15.2,11.5 12.5,14.6 8.6,14.6 C4.8,14.6 1.2,11.2 0.3,5.6Z" fill="#e9302a"/>
</svg>
<div class="a" style="left:78px;top:224px;width:88px;height:19px;background:#f0f0f0;border:1px dotted #dadada"></div>
<div class="t" style="left:41px;top:185px;font-size:12px">所有会话</div>
<div class="t" style="left:60px;top:206px;font-size:12px">01 基础阶段</div>
<div class="t" style="left:80px;top:225.5px;font-size:12.3px">192.168.10.100</div>
<div class="t" style="left:80px;top:245.5px;font-size:12.3px">192.168.10.120</div>
<div class="t" style="left:60px;top:266px;font-size:12px">公有云</div>
<!-- property grid -->
<div class="a" style="left:0;top:666px;width:177px;height:3px;background:#ebebeb"></div>
<div class="a" style="left:87px;top:669px;width:1px;height:201px;background:#c8c8c8"></div>
<div class="grid" style="top:690px"></div>
<div class="grid" style="top:711px"></div>
<div class="grid" style="top:732px"></div>
<div class="grid" style="top:753px"></div>
<div class="grid" style="top:774px"></div>
<div class="grid" style="top:795px"></div>
<div class="t gl" style="top:671px">名称</div><div class="t gv" style="top:671px">192.168.10.1...</div>
<div class="t gl" style="top:692px">主机</div><div class="t gv" style="top:692px">192.168.10.1...</div>
<div class="t gl" style="top:713px">端口</div><div class="t gv" style="top:713px">22</div>
<div class="t gl" style="top:734px">协议</div><div class="t gv" style="top:734px">SSH</div>
<div class="t gl" style="top:755px">用户名</div><div class="t gv" style="top:755px">root</div>
<div class="t gl" style="top:776px">说明</div>
<!-- tab bar -->
<div class="a" style="left:181px;top:134px;width:149px;height:25px;background:#0782dc"></div>
<div class="a" style="left:181px;top:156px;width:1150px;height:3px;background:#0782dc"></div>
<div class="a" style="left:195px;top:143px;width:8px;height:8px;border-radius:50%;background:#00c000"></div>
<div class="t" style="left:210px;top:138px;font-size:11px;color:#fff"><u>1</u> 192.168.10.100</div>
<svg style="left:315px;top:143px" width="6" height="6"><path d="M0 0l5.5 5.5M5.5 0L0 5.5" stroke="#cfe4f8" stroke-width="1"/></svg>
<div class="a" style="left:330px;top:135px;width:19px;height:21px;background:#fafafa;border:1px solid #c8c8d0;border-bottom:none"></div>
<svg style="left:336px;top:142px" width="9" height="9"><path d="M4.5 0v9M0 4.5h9" stroke="#333" stroke-width="1.8"/></svg>
<svg style="left:1282px;top:140px" width="30" height="11">
<path d="M6 0L1 5.5L6 11z" fill="#c8c8c8"/><path d="M15 0L20 5.5L15 11z" fill="#c8c8c8"/>
</svg>
<div class="tri" style="left:1319px;top:145px"></div>
<!-- scrollbar thumb -->
<div class="a" style="left:1323.5px;top:783px;width:1.5px;height:69px;background:#9c9aa4"></div>
<!-- cursor -->
<div class="a" style="left:333px;top:339px;width:7px;height:15px;border:1px solid #20d020"></div>
<!-- status bar -->
<div class="t st" style="left:4px;font-size:11.37px">ssh://root@192.168.10.100:22</div>
<svg style="left:884px;top:876px" width="10" height="10" viewBox="0 0 10 10">
<path d="M2.5 4V3 C2.5 0.5 7.5 0.5 7.5 3V4" stroke="#e8c880" stroke-width="1.6" fill="none"/>
<rect x="0.5" y="4" width="9" height="6" fill="#e6bf73"/>
</svg>
<div class="t st" style="left:897px">SSH2</div>
<div class="t st" style="left:953px">xterm</div>
<svg style="left:1007px;top:876px" width="11" height="11" viewBox="0 0 11 11">
<path d="M2.5 1.5V9.5M2.5 1.5H9" stroke="#606060" stroke-width="1.1" fill="none"/>
<path d="M0.5 8L2.5 10.5L4.5 8z M8 0L10.5 1.5L8 3z" fill="#606060"/>
</svg>
<div class="t st" style="left:1021px">160x43</div>
<svg style="left:1075px;top:877px" width="10" height="10" viewBox="0 0 10 10">
<path d="M0.5 0V9.5H9.5" stroke="#555" stroke-width="1" stroke-dasharray="1 1" fill="none"/>
<rect x="2.5" y="1.5" width="3" height="6" stroke="#555" stroke-width="1" fill="none"/>
</svg>
<div class="t st" style="left:1087px">12,22</div>
<div class="t st" style="left:1143px">1 会话</div>
<div class="a" style="left:1184px;top:880.5px;width:0;height:0;border-left:3px solid transparent;border-right:3px solid transparent;border-bottom:3.5px solid #000"></div>
<svg style="left:1208px;top:876px" width="30" height="11">
<path d="M6 0L0 6h3.5v5h5V6H12z" fill="#bdbdbd"/><path d="M23 11L17 5h3.5V0h5v5H29z" fill="#bdbdbd"/>
</svg>
<div class="t st" style="left:1255px;color:#9a9a9a">CAP</div>
<div class="t st" style="left:1286px">NUM</div>
<svg style="left:1321px;top:881px" width="10" height="10"><g fill="#b8b8b8"><rect x="7" y="1" width="2" height="2"/><rect x="4" y="4" width="2" height="2"/><rect x="7" y="4" width="2" height="2"/><rect x="1" y="7" width="2" height="2"/><rect x="4" y="7" width="2" height="2"/><rect x="7" y="7" width="2" height="2"/></g></svg>
</body></html>
